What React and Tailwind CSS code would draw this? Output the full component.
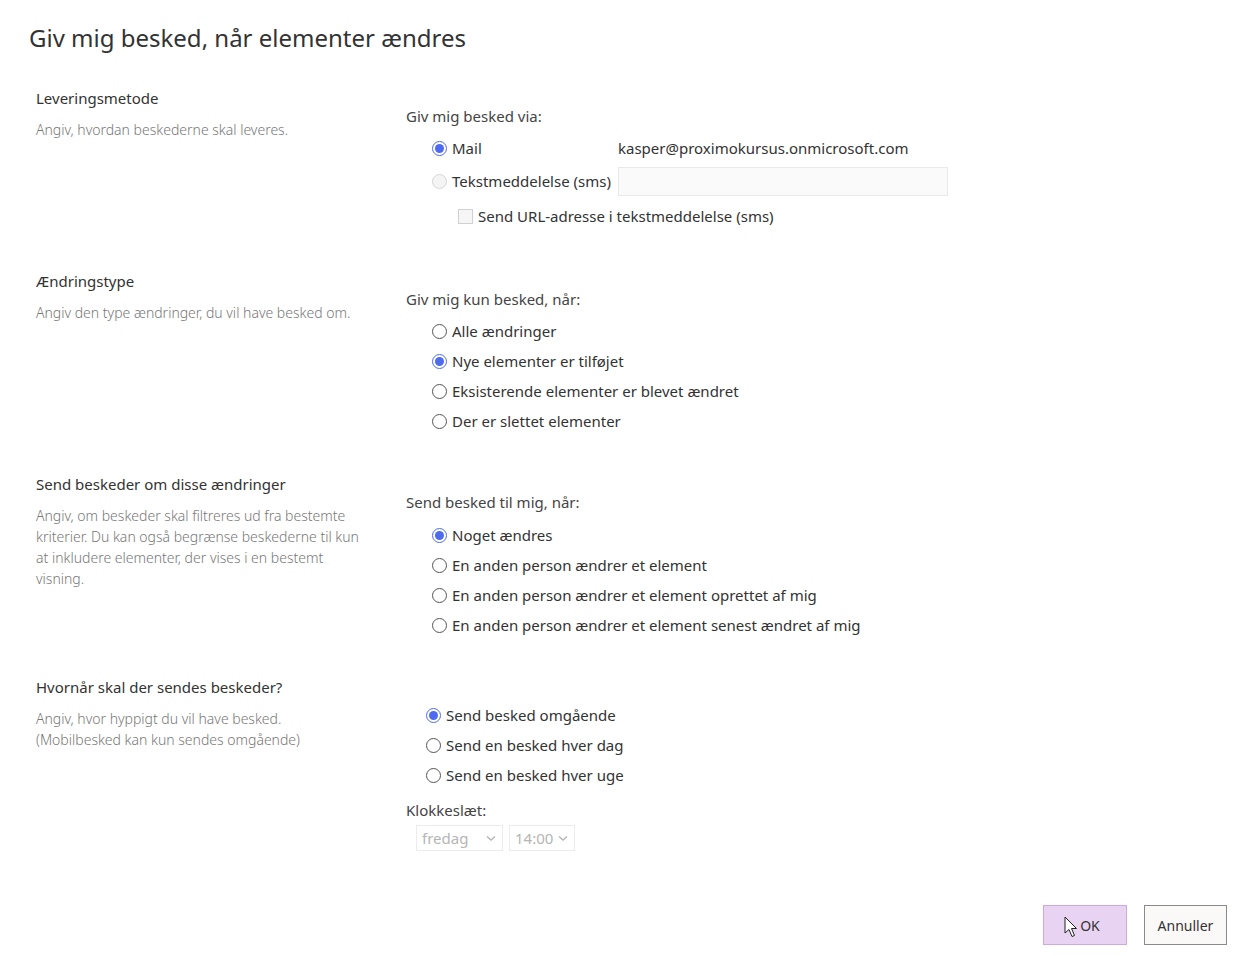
import React from "react";

const font = { fontFamily: '"Noto Sans", "Open Sans", sans-serif' };

function Radio({ checked, disabled }) {
  if (checked) {
    return (
      <span className="flex h-[15px] w-[15px] shrink-0 items-center justify-center rounded-full border border-[#4f6bed] bg-white">
        <span className="h-[9px] w-[9px] rounded-full bg-[#4f6bed]" />
      </span>
    );
  }
  if (disabled) {
    return <span className="h-[15px] w-[15px] shrink-0 rounded-full border border-[#d6d6d6] bg-[#f4f4f4]" />;
  }
  return <span className="h-[15px] w-[15px] shrink-0 rounded-full border border-[#555] bg-white" />;
}

function RadioRow({ checked, label, disabled }) {
  return (
    <div className="flex h-[30px] items-center gap-[5px]">
      <Radio checked={checked} disabled={disabled} />
      <span className="text-[15px] text-[#333]">{label}</span>
    </div>
  );
}

function LeftCol({ title, desc }) {
  return (
    <div className="w-[406px] shrink-0 pl-[36px] pr-[36px]">
      <div className="h-[20px] text-[15px] leading-[20px] text-[#333]">{title}</div>
      <div className="mt-[11px] text-[14px] font-light leading-[21px] text-[#777]">{desc}</div>
    </div>
  );
}

export default function App() {
  return (
    <div className="relative h-[956px] w-[1237px] overflow-hidden bg-white" style={font}>
      <div className="pl-[29px] pt-[22px] text-[24px] leading-[32px] text-[#333]">
        Giv mig besked, når elementer ændres
      </div>

      <div className="mt-[34px] flex h-[183px]">
        <LeftCol title="Leveringsmetode" desc="Angiv, hvordan beskederne skal leveres." />
        <div className="pt-[18px]">
          <div className="h-[20px] text-[15px] leading-[20px] text-[#444]">Giv mig besked via:</div>
          <div className="mt-[7px] pl-[26px]">
            <div className="flex h-[30px] items-center">
              <div className="flex w-[186px] items-center gap-[5px]">
                <Radio checked />
                <span className="text-[15px] text-[#333]">Mail</span>
              </div>
              <span className="text-[15px] text-[#333]">kasper@proximokursus.onmicrosoft.com</span>
            </div>
            <div className="mt-[3px] flex h-[30px] items-center">
              <div className="flex w-[186px] items-center gap-[5px]">
                <Radio disabled />
                <span className="text-[15px] text-[#333]">Tekstmeddelelse (sms)</span>
              </div>
              <div className="h-[29px] w-[330px] border border-[#e9e9e9] bg-[#fafafa]" />
            </div>
            <div className="mt-[5px] flex h-[30px] items-center gap-[5px] pl-[26px]">
              <span className="h-[15px] w-[15px] border border-[#d0d0d0] bg-[#f6f6f6]" />
              <span className="text-[15px] text-[#333]">Send URL-adresse i tekstmeddelelse (sms)</span>
            </div>
          </div>
        </div>
      </div>

      <div className="flex h-[203px]">
        <LeftCol title="Ændringstype" desc="Angiv den type ændringer, du vil have besked om." />
        <div className="pt-[18px]">
          <div className="h-[20px] text-[15px] leading-[20px] text-[#444]">Giv mig kun besked, når:</div>
          <div className="mt-[7px] pl-[26px]">
            <RadioRow label="Alle ændringer" />
            <RadioRow checked label="Nye elementer er tilføjet" />
            <RadioRow label="Eksisterende elementer er blevet ændret" />
            <RadioRow label="Der er slettet elementer" />
          </div>
        </div>
      </div>

      <div className="flex h-[203px]">
        <LeftCol
          title="Send beskeder om disse ændringer"
          desc="Angiv, om beskeder skal filtreres ud fra bestemte kriterier. Du kan også begrænse beskederne til kun at inkludere elementer, der vises i en bestemt visning."
        />
        <div className="pt-[18px]">
          <div className="h-[20px] text-[15px] leading-[20px] text-[#444]">Send besked til mig, når:</div>
          <div className="mt-[8px] pl-[26px]">
            <RadioRow checked label="Noget ændres" />
            <RadioRow label="En anden person ændrer et element" />
            <RadioRow label="En anden person ændrer et element oprettet af mig" />
            <RadioRow label="En anden person ændrer et element senest ændret af mig" />
          </div>
        </div>
      </div>

      <div className="flex h-[228px]">
        <LeftCol
          title="Hvornår skal der sendes beskeder?"
          desc={<>Angiv, hvor hyppigt du vil have besked.<br />(Mobilbesked kan kun sendes omgående)</>}
        />
        <div className="pt-[23px]">
          <div className="pl-[20px]">
            <RadioRow checked label="Send besked omgående" />
            <RadioRow label="Send en besked hver dag" />
            <RadioRow label="Send en besked hver uge" />
          </div>
          <div className="mt-[10px] h-[20px] text-[15px] leading-[20px] text-[#444]">Klokkeslæt:</div>
          <div className="mt-[5px] flex gap-[6px] pl-[10px]">
            <div className="flex h-[26px] w-[87px] items-center justify-between border border-[#ececec] pl-[5px] pr-[6px] text-[15px] text-[#b5b5b5]">
              <span>fredag</span>
              <svg width="10" height="7" viewBox="0 0 10 7"><path d="M1 1.5 L5 5 L9 1.5" fill="none" stroke="#b5b5b5" strokeWidth="1.4" /></svg>
            </div>
            <div className="flex h-[26px] w-[66px] items-center justify-between border border-[#ececec] pl-[5px] pr-[6px] text-[15px] text-[#b5b5b5]">
              <span>14:00</span>
              <svg width="10" height="7" viewBox="0 0 10 7"><path d="M1 1.5 L5 5 L9 1.5" fill="none" stroke="#b5b5b5" strokeWidth="1.4" /></svg>
            </div>
          </div>
        </div>
      </div>

      <div className="flex justify-end gap-[17px] pr-[10px]">
        <div className="relative flex h-[40px] w-[84px] items-center justify-center border border-[#cfa9e0] bg-[#e9d3f2] text-[14px] text-[#333]">
          <span className="pl-[10px]">OK</span>
          <svg className="absolute left-[20px] top-[10px]" width="14" height="22" viewBox="0 0 14 22">
            <path d="M1 1 L1 17 L5 13.5 L8 20.5 L10.5 19.5 L7.5 12.5 L12.5 12.5 Z" fill="#fff" stroke="#222" strokeWidth="1" strokeLinejoin="round" />
          </svg>
        </div>
        <div className="flex h-[40px] w-[83px] items-center justify-center border border-[#8a8a8a] bg-[#faf9f8] text-[14px] text-[#333]">
          Annuller
        </div>
      </div>
    </div>
  );
}
